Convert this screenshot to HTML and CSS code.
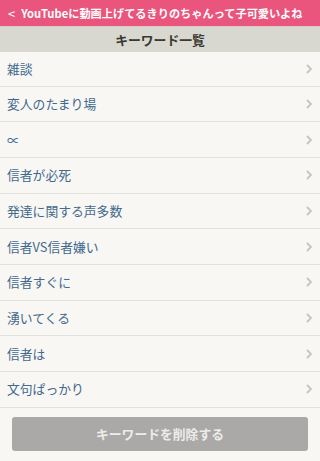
FILE: index.html
```html
<!DOCTYPE html>
<html lang="ja">
<head>
<meta charset="utf-8">
<link rel="stylesheet" href="styles.css">
</head>
<body>
<div class="page">
  <div class="topbar"><span class="back">&lt;</span><span class="toptitle">YouTubeに動画上げてるきりのちゃんって子可愛いよね</span></div>
  <div class="titlebar">キーワード一覧</div>
  <ul class="list">
    <li class="row"><span class="label">雑談</span><span class="chev"><svg width="6" height="10" viewBox="0 0 6 10"><path d="M1 1l4 4-4 4" fill="none" stroke="#c4c4c4" stroke-width="1.8"/></svg></span></li>
    <li class="row"><span class="label">変人のたまり場</span><span class="chev"><svg width="6" height="10" viewBox="0 0 6 10"><path d="M1 1l4 4-4 4" fill="none" stroke="#c4c4c4" stroke-width="1.8"/></svg></span></li>
    <li class="row"><span class="label">∝</span><span class="chev"><svg width="6" height="10" viewBox="0 0 6 10"><path d="M1 1l4 4-4 4" fill="none" stroke="#c4c4c4" stroke-width="1.8"/></svg></span></li>
    <li class="row"><span class="label">信者が必死</span><span class="chev"><svg width="6" height="10" viewBox="0 0 6 10"><path d="M1 1l4 4-4 4" fill="none" stroke="#c4c4c4" stroke-width="1.8"/></svg></span></li>
    <li class="row"><span class="label">発達に関する声多数</span><span class="chev"><svg width="6" height="10" viewBox="0 0 6 10"><path d="M1 1l4 4-4 4" fill="none" stroke="#c4c4c4" stroke-width="1.8"/></svg></span></li>
    <li class="row"><span class="label">信者VS信者嫌い</span><span class="chev"><svg width="6" height="10" viewBox="0 0 6 10"><path d="M1 1l4 4-4 4" fill="none" stroke="#c4c4c4" stroke-width="1.8"/></svg></span></li>
    <li class="row"><span class="label">信者すぐに</span><span class="chev"><svg width="6" height="10" viewBox="0 0 6 10"><path d="M1 1l4 4-4 4" fill="none" stroke="#c4c4c4" stroke-width="1.8"/></svg></span></li>
    <li class="row"><span class="label">湧いてくる</span><span class="chev"><svg width="6" height="10" viewBox="0 0 6 10"><path d="M1 1l4 4-4 4" fill="none" stroke="#c4c4c4" stroke-width="1.8"/></svg></span></li>
    <li class="row"><span class="label">信者は</span><span class="chev"><svg width="6" height="10" viewBox="0 0 6 10"><path d="M1 1l4 4-4 4" fill="none" stroke="#c4c4c4" stroke-width="1.8"/></svg></span></li>
    <li class="row"><span class="label">文句ぱっかり</span><span class="chev"><svg width="6" height="10" viewBox="0 0 6 10"><path d="M1 1l4 4-4 4" fill="none" stroke="#c4c4c4" stroke-width="1.8"/></svg></span></li>
  </ul>
  <div class="footer"><button class="delete">キーワードを削除する</button></div>
</div>
</body>
</html>
```
FILE: styles.css
```css
* { box-sizing: border-box; }
html, body { margin: 0; padding: 0; }
body {
  background: #f8f7f3;
  font-family: "Noto Sans CJK JP", "Noto Sans", sans-serif;
  width: 320px;
  height: 461px;
  overflow: hidden;
}
.page { display: flex; flex-direction: column; }
.topbar {
  height: 27px;
  background: #e9557c;
  color: #fff;
  font-weight: bold;
  font-size: 11.2px;
  display: flex;
  align-items: center;
  padding-left: 8px;
  white-space: nowrap;
  overflow: hidden;
  border-bottom: 1px solid #d9c9c9;
}
.back { font-size: 13px; margin-right: 6px; font-weight: normal; }
.titlebar {
  height: 25px;
  background: #d9d8d0;
  color: #3a3832;
  font-weight: bold;
  font-size: 12.8px;
  display: flex;
  align-items: center;
  justify-content: center;
}
.list { list-style: none; margin: 0; padding: 0; }
.row {
  height: 35.7px;
  display: flex;
  align-items: center;
  justify-content: space-between;
  padding: 0 8px 0 7px;
  border-bottom: 1px solid #e2e1db;
  color: #43698e;
  font-size: 12.8px;
}
.row:first-child { height: 34.5px; }
.label { line-height: 1; padding-top: 1px; }
.chev { display: flex; align-items: center; }
.footer {
  padding: 9px 12px 0 12px;
}
.delete {
  width: 296px;
  height: 34px;
  border: none;
  border-radius: 3px;
  background: #aaa9a7;
  color: #ececea;
  font-family: "Noto Sans CJK JP", "Noto Sans", sans-serif;
  font-size: 12.8px;
  font-weight: bold;
  padding: 0;
}
```
